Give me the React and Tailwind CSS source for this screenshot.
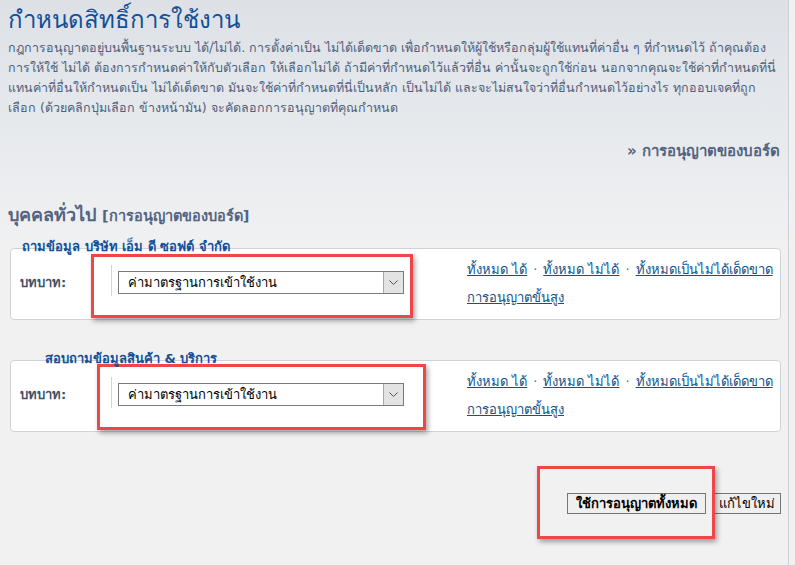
import React from "react";

const font = { fontFamily: '"DejaVu Sans", "Noto Sans", Tahoma, sans-serif' };

const intro = [
  "กฎการอนุญาตอยู่บนพื้นฐานระบบ ได้/ไม่ได้. การตั้งค่าเป็น ไม่ได้เด็ดขาด เพื่อกำหนดให้ผู้ใช้หรือกลุ่มผู้ใช้แทนที่ค่าอื่น ๆ ที่กำหนดไว้ ถ้าคุณต้อง",
  "การให้ใช้ ไม่ได้ ต้องการกำหนดค่าให้กับตัวเลือก ให้เลือกไม่ได้ ถ้ามีค่าที่กำหนดไว้แล้วที่อื่น ค่านั้นจะถูกใช้ก่อน นอกจากคุณจะใช้ค่าที่กำหนดที่นี่",
  "แทนค่าที่อื่นให้กำหนดเป็น ไม่ได้เด็ดขาด มันจะใช้ค่าที่กำหนดที่นี่เป็นหลัก เป็นไม่ได้ และจะไม่สนใจว่าที่อื่นกำหนดไว้อย่างไร ทุกออบเจคที่ถูก",
  "เลือก (ด้วยคลิกปุ่มเลือก ข้างหน้ามัน) จะคัดลอกการอนุญาตที่คุณกำหนด",
];

const forums = [
  { name: "ถามข้อมูล บริษัท เอ็ม ดี ซอฟต์ จำกัด", legendPad: "pl-[12px]", mark: "left-[81px] w-[322px]" },
  { name: "สอบถามข้อมูลสินค้า & บริการ", legendPad: "pl-[35px]", mark: "left-[87px] w-[329px]" },
];

function Highlight({ className }) {
  return (
    <div
      className={`pointer-events-none absolute border-[3px] border-[#f04646] shadow-[2px_3px_5px_rgba(0,0,0,0.35)] ${className}`}
    />
  );
}

function RoleSelect() {
  return (
    <div className="flex h-[23px] w-[286px] items-stretch border border-[#7a7a7a] bg-white">
      <span className="flex-1 pl-[9px] text-[13px] leading-[21px] text-black">ค่ามาตรฐานการเข้าใช้งาน</span>
      <span className="flex w-[20px] items-center justify-center border-l border-[#a8a8a8] bg-[#e3e3e3]">
        <svg width="9" height="5" viewBox="0 0 9 5">
          <path d="M0.5 0.5 L4.5 4.5 L8.5 0.5" fill="none" stroke="#555" strokeWidth="1" />
        </svg>
      </span>
    </div>
  );
}

function ForumBlock({ forum, top }) {
  return (
    <div className="relative">
      <div className={`relative z-10 h-[14px] ${forum.legendPad}`}>
        <span className="text-[13px] font-bold leading-[14px] text-[#115098]">{forum.name}</span>
      </div>
      <div className="flex h-[72px] items-start rounded-[4px] border border-[#cfd3d8] bg-white">
        <div className="flex w-[100px] pl-[9px] pt-[24px]">
          <span className="text-[13px] font-bold text-[#425067]">บทบาท:</span>
        </div>
        <div className="mt-[16px] h-[31px] w-px bg-[#d4d4d4]" />
        <div className="ml-[6px] mt-[22px]">
          <RoleSelect />
        </div>
        <div className="ml-[63px] mt-[11px] flex flex-col gap-[9px] text-[13px] text-[#105289]">
          <div className="flex items-center gap-[6px]">
            <a className="underline">ทั้งหมด ได้</a>
            <span className="text-[#536482]">·</span>
            <a className="underline">ทั้งหมด ไม่ได้</a>
            <span className="text-[#536482]">·</span>
            <a className="underline">ทั้งหมดเป็นไม่ได้เด็ดขาด</a>
          </div>
          <a className="underline">การอนุญาตขั้นสูง</a>
        </div>
      </div>
      <Highlight className={`${forum.mark} ${top}`} />
    </div>
  );
}

export default function App() {
  return (
    <div className="h-[565px] w-[795px] overflow-hidden bg-[#f1f1f1]" style={font}>
      <div className="h-full w-[789px] border-r border-[#cdd0d4] bg-gradient-to-b from-[#dde1e6] via-[#eceef0] via-[35%] to-[#f1f1f1] to-[45%] pl-[8px] pr-[7px]">
        <h1 className="pt-[4px] text-[24px] font-medium leading-[32px] text-[#115098]">กำหนดสิทธิ์การใช้งาน</h1>
        <div className="mt-[2px] text-[12.5px] leading-[20px] text-[#4f5f7c]">
          {intro.map((line, i) => (
            <div key={i} className="whitespace-nowrap">{line}</div>
          ))}
        </div>

        <div className="mt-[22px] flex justify-end pr-[1px]">
          <span className="text-[15px] font-bold text-[#536482]">» การอนุญาตของบอร์ด</span>
        </div>

        <h2 className="mt-[38px] flex items-baseline gap-[6px] text-[#536482]">
          <span className="text-[18px] font-bold">บุคคลทั่วไป</span>
          <span className="text-[14.5px] font-bold">[การอนุญาตของบอร์ด]</span>
        </h2>

        <div className="ml-[2px] mt-[6px] flex flex-col gap-[26px]">
          <ForumBlock forum={forums[0]} top="top-[20px] h-[64px]" />
          <ForumBlock forum={forums[1]} top="top-[18px] h-[66px]" />
        </div>

        <div className="relative mt-[61px] flex justify-end gap-[7px]">
          <button className="h-[21px] border border-[#767676] bg-[#efefef] px-[8px] text-[13px] font-bold leading-[19px] text-black">
            ใช้การอนุญาตทั้งหมด
          </button>
          <button className="h-[21px] border border-[#767676] bg-[#efefef] px-[5px] text-[13px] leading-[19px] text-black">
            แก้ไขใหม่
          </button>
          <Highlight className="-top-[27px] left-[529px] h-[73px] w-[178px]" />
        </div>
      </div>
    </div>
  );
}
